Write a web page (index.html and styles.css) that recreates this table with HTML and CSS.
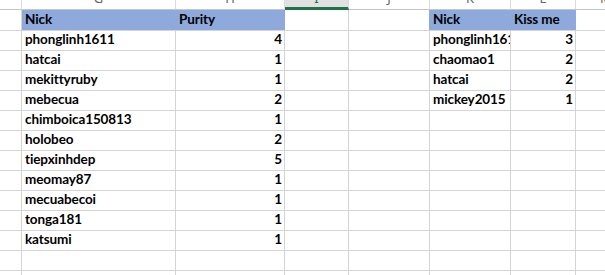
FILE: index.html
```html
<!DOCTYPE html>
<html>
<head>
<meta charset="utf-8">
<link rel="stylesheet" href="styles.css">
</head>
<body>
<div class="sheet">
  <div class="h"></div><div class="h">G</div><div class="h">H</div><div class="h sel">I</div><div class="h">J</div><div class="h">K</div><div class="h">L</div><div class="h last edge">M</div>

  <div class="c first"></div><div class="c first fill">Nick</div><div class="c first fill">Purity</div><div class="c first"></div><div class="c first fill-edge"></div><div class="c first fill">Nick</div><div class="c first fill">Kiss me</div><div class="c first last"></div>

  <div class="c"></div><div class="c">phonglinh1611</div><div class="c num">4</div><div class="c"></div><div class="c"></div><div class="c">phonglinh1611</div><div class="c num">3</div><div class="c last"></div>
  <div class="c"></div><div class="c">hatcai</div><div class="c num">1</div><div class="c"></div><div class="c"></div><div class="c">chaomao1</div><div class="c num">2</div><div class="c last"></div>
  <div class="c"></div><div class="c">mekittyruby</div><div class="c num">1</div><div class="c"></div><div class="c"></div><div class="c">hatcai</div><div class="c num">2</div><div class="c last"></div>
  <div class="c"></div><div class="c">mebecua</div><div class="c num">2</div><div class="c"></div><div class="c"></div><div class="c">mickey2015</div><div class="c num">1</div><div class="c last"></div>
  <div class="c"></div><div class="c">chimboica150813</div><div class="c num">1</div><div class="c"></div><div class="c"></div><div class="c"></div><div class="c"></div><div class="c last"></div>
  <div class="c"></div><div class="c">holobeo</div><div class="c num">2</div><div class="c"></div><div class="c"></div><div class="c"></div><div class="c"></div><div class="c last"></div>
  <div class="c"></div><div class="c">tiepxinhdep</div><div class="c num">5</div><div class="c"></div><div class="c"></div><div class="c"></div><div class="c"></div><div class="c last"></div>
  <div class="c"></div><div class="c">meomay87</div><div class="c num">1</div><div class="c"></div><div class="c"></div><div class="c"></div><div class="c"></div><div class="c last"></div>
  <div class="c"></div><div class="c">mecuabecoi</div><div class="c num">1</div><div class="c"></div><div class="c"></div><div class="c"></div><div class="c"></div><div class="c last"></div>
  <div class="c"></div><div class="c">tonga181</div><div class="c num">1</div><div class="c"></div><div class="c"></div><div class="c"></div><div class="c"></div><div class="c last"></div>
  <div class="c"></div><div class="c">katsumi</div><div class="c num">1</div><div class="c"></div><div class="c"></div><div class="c"></div><div class="c"></div><div class="c last"></div>
  <div class="c"></div><div class="c"></div><div class="c"></div><div class="c"></div><div class="c"></div><div class="c"></div><div class="c"></div><div class="c last"></div>
  <div class="c"></div><div class="c"></div><div class="c"></div><div class="c"></div><div class="c"></div><div class="c"></div><div class="c"></div><div class="c last"></div>
</div>
</body>
</html>
```

FILE: styles.css
```css
html, body {
  margin: 0;
  padding: 0;
  background: #fff;
  overflow: hidden;
}
.sheet {
  display: grid;
  grid-template-columns: 22px 154px 109px 64px 81px 81px 65px 29px;
  grid-auto-rows: 20px;
  grid-template-rows: 10px;
  width: 605px;
  height: 275px;
  overflow: hidden;
  font-family: Lato, "Liberation Sans", sans-serif;
  font-weight: bold;
  font-size: 13.5px;
  letter-spacing: -0.1px;
  color: #000;
}
.h {
  box-sizing: border-box;
  height: 10px;
  border-right: 1px solid #dadada;
  border-bottom: 1px solid #c6c6c6;
  overflow: hidden;
  display: flex;
  align-items: flex-end;
  justify-content: center;
  padding-bottom: 4px;
  font-family: "Noto Sans", "Liberation Sans", sans-serif;
  font-weight: normal;
  font-size: 13px;
  line-height: 14px;
  letter-spacing: 0;
  color: #666;
}
.h.edge {
  justify-content: flex-start;
  padding-left: 24px;
}
.h.sel {
  background: #e1e1e1;
  border-bottom: 3px solid #217346;
  padding-bottom: 2px;
  color: #217346;
}
.c {
  box-sizing: border-box;
  height: 20px;
  border-right: 1px solid #d4d4d4;
  border-top: 1px solid #d4d4d4;
  display: flex;
  align-items: flex-end;
  padding: 0 2px 3px 3px;
  line-height: 15px;
  white-space: nowrap;
  overflow: hidden;
}
.c.first {
  border-top: none;
}
.c.num {
  justify-content: flex-end;
}
.c.fill {
  background: #8ea9db;
  border-right-color: #8ea9db;
}
.c.fill-edge {
  border-right-color: #8ea9db;
}
.last {
  border-right: none;
}
```
